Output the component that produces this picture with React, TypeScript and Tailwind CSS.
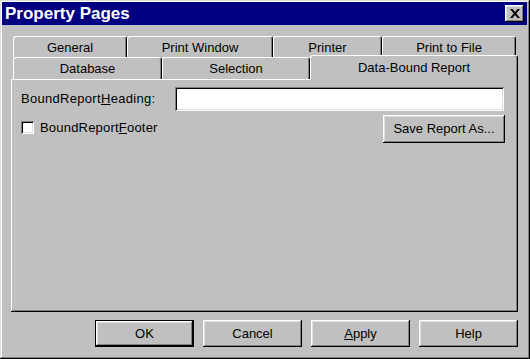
import React from "react";

const raised =
  "shadow-[inset_-1px_-1px_#000,inset_1px_1px_#fff,inset_-2px_-2px_#808080,inset_2px_2px_#dfdfdf]";
const sunken =
  "shadow-[inset_1px_1px_#808080,inset_-1px_-1px_#fff,inset_2px_2px_#000,inset_-2px_-2px_#dfdfdf]";

const Tab = ({ label, width }: { label: string; width: string }) => (
  <div
    className={`${width} h-full flex items-center justify-center rounded-t-[3px] border-t border-l border-r border-t-white border-l-white border-r-black shadow-[inset_-1px_0_#808080] leading-none`}
  >
    {label}
  </div>
);

const Button = ({ children, isDefault }: { children: React.ReactNode; isDefault?: boolean }) => (
  <div
    className={
      isDefault
        ? "w-[99px] h-[27px] border border-black flex"
        : "w-[99px] h-[27px] flex"
    }
  >
    <div className={`flex-1 flex items-center justify-center ${raised}`}>{children}</div>
  </div>
);

const App = () => {
  return (
    <div className="w-[530px] h-[359px] bg-[#c0c0c0] pt-[2px] pl-[2px] pr-[3px] flex flex-col text-[13px] text-black font-['Liberation_Sans',Arial,sans-serif] shadow-[inset_-1px_-1px_#000,inset_1px_1px_#dfdfdf,inset_-2px_-2px_#808080,inset_2px_2px_#fff]">
      {/* title bar */}
      <div className="h-[23px] bg-[#000080] flex items-center justify-between pl-[3px] pr-[3px]">
        <span className="text-white font-bold text-[17px] leading-none">Property Pages</span>
        <div className={`w-[19px] h-[17px] bg-[#c0c0c0] flex items-center justify-center ${raised}`}>
          <svg width="10" height="9" viewBox="0 0 10 9">
            <path d="M0 0h2.5l2.5 3 2.5-3H10L6.3 4.5 10 9H7.5L5 6 2.5 9H0l3.7-4.5z" fill="#000" />
          </svg>
        </div>
      </div>

      <div className="pl-[9px] mt-[11px] flex flex-col w-[516px]">
        {/* back row of tabs */}
        <div className="ml-[2px] flex h-[21px]">
          <Tab label="General" width="w-[114px]" />
          <Tab label="Print Window" width="w-[146px]" />
          <Tab label="Printer" width="w-[109px]" />
          <Tab label="Print to File" width="w-[134px]" />
        </div>
        {/* front row of tabs */}
        <div className="ml-[2px] flex items-end h-[22px]">
          <Tab label="Database" width="w-[149px]" />
          <Tab label="Selection" width="w-[148px]" />
          <div className="relative z-10 w-[208px] h-[25px] -mb-[1px] bg-[#c0c0c0] flex justify-center pt-[5px] rounded-t-[3px] border-t border-l border-r border-t-white border-l-white border-r-black shadow-[inset_-1px_0_#808080] leading-none">
            Data-Bound Report
          </div>
        </div>

        {/* panel */}
        <div className="w-[507px] h-[233px] pt-[8px] shadow-[inset_-1px_-1px_#000,inset_1px_1px_#fff,inset_-2px_-2px_#808080]">
          <div className="flex items-center pl-[10px]">
            <span className="w-[154px] tracking-[0.3px]">
              BoundReport<u>H</u>eading:
            </span>
            <div className={`w-[329px] h-[24px] bg-white ${sunken}`} />
          </div>
          <div className="flex items-start justify-between pl-[10px] pr-[13px] mt-[4px]">
            <div className="flex items-center gap-[6px] mt-[3px]">
              <div className={`w-[13px] h-[13px] bg-white ${sunken}`} />
              <span className="tracking-[0.2px]">
                BoundReport<u>F</u>ooter
              </span>
            </div>
            <div className={`w-[122px] h-[28px] flex items-center justify-center ${raised}`}>
              Save Report As...
            </div>
          </div>
        </div>

        {/* dialog buttons */}
        <div className="w-[507px] flex justify-end gap-[9px] mt-[8px]">
          <Button isDefault>OK</Button>
          <Button>Cancel</Button>
          <Button>
            <span>
              <u>A</u>pply
            </span>
          </Button>
          <Button>Help</Button>
        </div>
      </div>
    </div>
  );
};

export default App;
